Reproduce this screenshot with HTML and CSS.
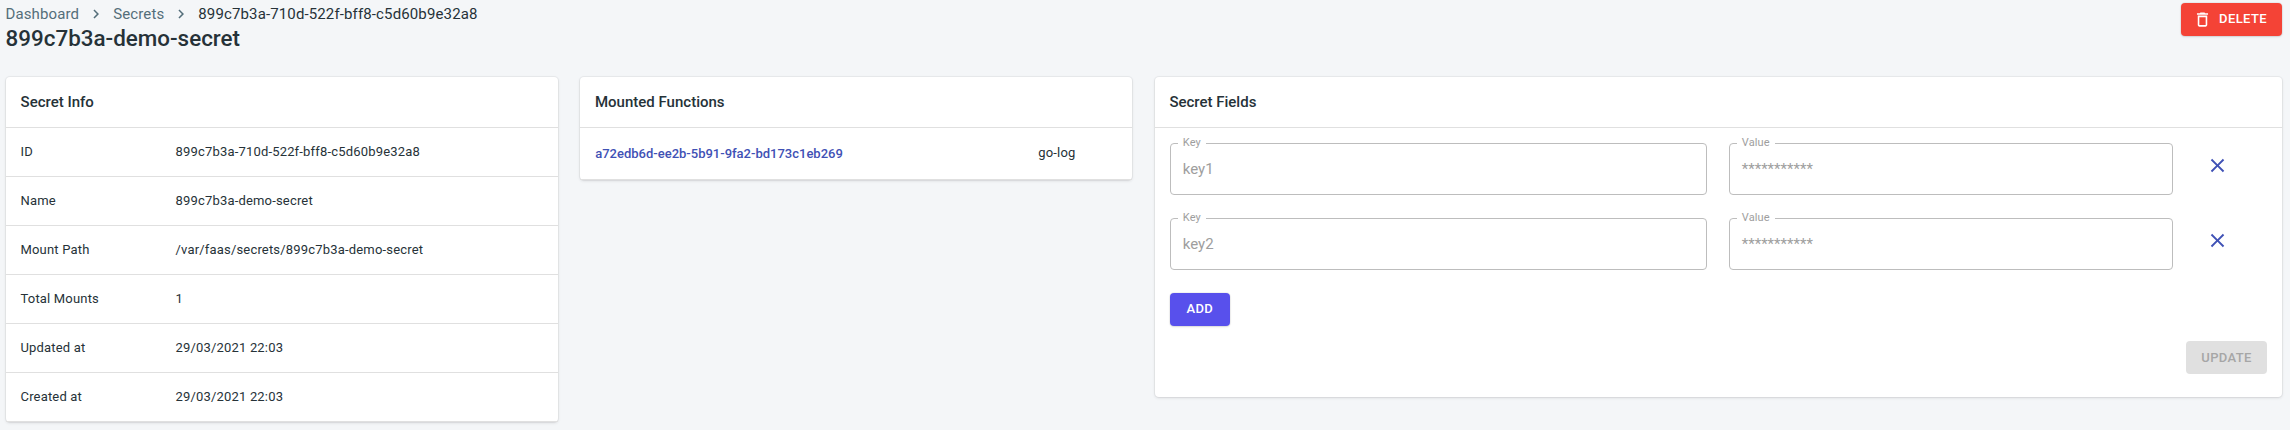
FILE: index.html
```html
<!DOCTYPE html>
<html lang="en">
<head>
<meta charset="utf-8">
<title>899c7b3a-demo-secret</title>
<link rel="stylesheet" href="styles.css">
</head>
<body>
<header class="page-header">
  <div>
    <nav class="breadcrumbs">
      <a>Dashboard</a>
      <svg class="chevron" viewBox="0 0 24 24"><path d="M10 6 8.59 7.41 13.17 12l-4.58 4.59L10 18l6-6z"/></svg>
      <a>Secrets</a>
      <svg class="chevron" viewBox="0 0 24 24"><path d="M10 6 8.59 7.41 13.17 12l-4.58 4.59L10 18l6-6z"/></svg>
      <span>899c7b3a-710d-522f-bff8-c5d60b9e32a8</span>
    </nav>
    <h1 class="title">899c7b3a-demo-secret</h1>
  </div>
  <button class="btn btn-delete"><svg viewBox="0 0 24 24"><path d="M6 19c0 1.1.9 2 2 2h8c1.1 0 2-.9 2-2V7H6v12zM8 9h8v10H8V9zm7.5-5-1-1h-5l-1 1H5v2h14V4z"/></svg><span>DELETE</span></button>
</header>
<main class="grid">
  <section class="card">
    <h2 class="card-title">Secret Info</h2>
    <dl class="info">
      <div class="row"><dt>ID</dt><dd>899c7b3a-710d-522f-bff8-c5d60b9e32a8</dd></div>
      <div class="row"><dt>Name</dt><dd>899c7b3a-demo-secret</dd></div>
      <div class="row"><dt>Mount Path</dt><dd>/var/faas/secrets/899c7b3a-demo-secret</dd></div>
      <div class="row"><dt>Total Mounts</dt><dd>1</dd></div>
      <div class="row"><dt>Updated at</dt><dd>29/03/2021 22:03</dd></div>
      <div class="row"><dt>Created at</dt><dd>29/03/2021 22:03</dd></div>
    </dl>
  </section>
  <section class="card">
    <h2 class="card-title">Mounted Functions</h2>
    <div class="fn-row"><a class="fn-link">a72edb6d-ee2b-5b91-9fa2-bd173c1eb269</a><span class="fn-name">go-log</span></div>
  </section>
  <section class="card">
    <h2 class="card-title">Secret Fields</h2>
    <div class="fields">
      <div class="field-row">
        <fieldset class="field"><legend>Key</legend><span>key1</span></fieldset>
        <fieldset class="field"><legend>Value</legend><span>***********</span></fieldset>
        <svg class="remove" viewBox="0 0 24 24"><path d="M19 6.41 17.59 5 12 10.59 6.41 5 5 6.41 10.59 12 5 17.59 6.41 19 12 13.41 17.59 19 19 17.59 13.41 12z"/></svg>
      </div>
      <div class="field-row">
        <fieldset class="field"><legend>Key</legend><span>key2</span></fieldset>
        <fieldset class="field"><legend>Value</legend><span>***********</span></fieldset>
        <svg class="remove" viewBox="0 0 24 24"><path d="M19 6.41 17.59 5 12 10.59 6.41 5 5 6.41 10.59 12 5 17.59 6.41 19 12 13.41 17.59 19 19 17.59 13.41 12z"/></svg>
      </div>
      <button class="btn btn-add"><span>ADD</span></button>
    </div>
    <div class="actions"><button class="btn btn-update" disabled>UPDATE</button></div>
  </section>
</main>
</body>
</html>
```
FILE: styles.css
```css
* { box-sizing: border-box; }

body {
  margin: 0;
  padding: 3px 8px 0 6px;
  height: 430px;
  overflow: hidden;
  background: #f4f6f8;
  color: #263238;
  font: 400 13px/20px Roboto, sans-serif;
}

.page-header {
  display: flex;
  justify-content: space-between;
  align-items: flex-start;
  height: 74px;
}

.breadcrumbs {
  display: flex;
  align-items: center;
  height: 21px;
  margin-left: -0.6px;
  font-size: 15px;
  letter-spacing: 0.13px;
}

.breadcrumbs a { color: #546e7a; }

.chevron {
  width: 18px;
  height: 18px;
  margin: 0 8px;
  fill: #546e7a;
}

.title {
  margin: 0 0 0 -0.4px;
  font-size: 22.4px;
  font-weight: 500;
  line-height: 28px;
}

.btn {
  display: flex;
  align-items: center;
  justify-content: center;
  height: 33px;
  padding: 0 15px;
  border: 0;
  border-radius: 4px;
  color: #fff;
  font: 500 13px/23px Roboto, sans-serif;
  letter-spacing: 0.37px;
  box-shadow: 0 0 0 1px rgba(63, 63, 68, 0.05), 0 1px 2px rgba(63, 63, 68, 0.15);
}

.btn span { padding-bottom: 2px; }

.btn-delete {
  width: 101px;
  padding: 0 3px 0 0;
  gap: 7px;
  background: #f44336;
}

.btn-delete svg {
  width: 19px;
  height: 19px;
  fill: #fff;
}

.grid {
  display: grid;
  grid-template-columns: 552px 552px 1127px;
  column-gap: 22.4px;
  align-items: start;
}

.card {
  background: #fff;
  border-radius: 4px;
  box-shadow: 0 0 0 1px rgba(63, 63, 68, 0.05), 0 1px 3px rgba(63, 63, 68, 0.15);
}

.card-title {
  margin: 0;
  height: 51px;
  padding: 0 14.6px;
  border-bottom: 1px solid #e0e0e0;
  font-size: 15px;
  font-weight: 500;
  line-height: 50px;
}

.info { margin: 0; }

.row {
  display: grid;
  grid-template-columns: 155px 1fr;
  height: 49px;
  padding: 0 14.5px;
  border-bottom: 1px solid #e0e0e0;
  line-height: 48px;
  letter-spacing: 0.18px;
}

.row dd { margin: 0; }

.fn-row {
  display: flex;
  height: 52px;
  padding: 0 14.8px;
  border-bottom: 1px solid #e0e0e0;
  line-height: 51px;
}

.fn-link {
  width: 443px;
  color: #3f51b5;
  font-weight: 500;
}

.fn-name {
  line-height: 50px;
  letter-spacing: 0.18px;
}

.fields { padding: 9px 15px 0; }

.field-row {
  display: grid;
  grid-template-columns: 537px 444px 90px;
  column-gap: 22px;
  height: 75px;
  align-items: start;
}

.field {
  display: flex;
  align-items: center;
  height: 58px;
  margin: 0;
  padding: 0 12px 6px;
  border: 1px solid #bdbdbd;
  border-radius: 4px;
  color: #9e9e9e;
  font-size: 15px;
}

.field legend {
  margin-left: -5px;
  padding: 0 5px;
  font-size: 11px;
  line-height: 12px;
  letter-spacing: 0.1px;
}

.remove {
  width: 23px;
  height: 23px;
  margin: 16.5px 0 0 11.6px;
  fill: #3f51b5;
}

.btn-add {
  width: 60px;
  margin-top: 6px;
  background: #5850ec;
}

.actions {
  display: flex;
  justify-content: flex-end;
  padding: 15px 15px 23px;
}

.btn-update {
  background: #e0e0e0;
  color: #a6a6a6;
  box-shadow: none;
}
```
